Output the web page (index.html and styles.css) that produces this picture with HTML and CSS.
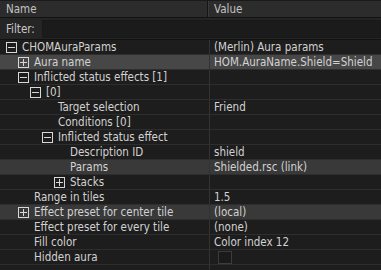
FILE: index.html
```html
<!DOCTYPE html>
<html lang="en">
<head>
    <meta charset="UTF-8">
    <title>Property grid</title>
    <link rel="stylesheet" href="styles.css">
</head>
<body>
<div class="grid">
    <div class="header">
        <div class="col-name">Name</div>
        <div class="col-value">Value</div>
    </div>
    <div class="filter">
        <label for="filterInput">Filter:</label>
        <input type="text" id="filterInput">
    </div>
    <div class="rows">
        <div class="row">
            <div class="name lvl0"><span class="box minus"></span>CHOMAuraParams</div>
            <div class="value">(Merlin) Aura params</div>
        </div>
        <div class="row hover">
            <div class="name lvl1"><span class="box plus"></span>Aura name</div>
            <div class="value">HOM.AuraName.Shield=Shield</div>
        </div>
        <div class="row">
            <div class="name lvl1"><span class="box minus"></span>Inflicted status effects [1]</div>
            <div class="value"></div>
        </div>
        <div class="row">
            <div class="name lvl2"><span class="box minus"></span>[0]</div>
            <div class="value"></div>
        </div>
        <div class="row">
            <div class="name lvl3 leaf">Target selection</div>
            <div class="value">Friend</div>
        </div>
        <div class="row">
            <div class="name lvl3 leaf">Conditions [0]</div>
            <div class="value"></div>
        </div>
        <div class="row">
            <div class="name lvl3"><span class="box minus"></span>Inflicted status effect</div>
            <div class="value"></div>
        </div>
        <div class="row">
            <div class="name lvl4 leaf">Description ID</div>
            <div class="value">shield</div>
        </div>
        <div class="row selected">
            <div class="name lvl4 leaf">Params</div>
            <div class="value">Shielded.rsc (link)</div>
        </div>
        <div class="row">
            <div class="name lvl4"><span class="box plus"></span>Stacks</div>
            <div class="value"></div>
        </div>
        <div class="row">
            <div class="name lvl1 leaf">Range in tiles</div>
            <div class="value">1.5</div>
        </div>
        <div class="row selected">
            <div class="name lvl1"><span class="box plus"></span>Effect preset for center tile</div>
            <div class="value">(local)</div>
        </div>
        <div class="row">
            <div class="name lvl1 leaf">Effect preset for every tile</div>
            <div class="value">(none)</div>
        </div>
        <div class="row">
            <div class="name lvl1 leaf">Fill color</div>
            <div class="value">Color index 12</div>
        </div>
        <div class="row">
            <div class="name lvl1 leaf">Hidden aura</div>
            <div class="value"><span class="check"></span></div>
        </div>
        <div class="row">
            <div class="name"></div>
            <div class="value"></div>
        </div>
    </div>
</div>
</body>
</html>
```

FILE: styles.css
```css
* {
    margin: 0;
    padding: 0;
    box-sizing: border-box;
}

body {
    background: #1c1c1c;
    color: #d2d2d2;
    font-family: "DejaVu Sans Condensed", "DejaVu Sans", sans-serif;
    font-size: 11.5px;
    overflow: hidden;
}

.grid {
    width: 381px;
    height: 270px;
    overflow: hidden;
}

.header {
    display: flex;
    height: 18px;
    background: #2c2c2c;
    border-top: 1px solid #1a1a1a;
    border-bottom: 1px solid #121212;
    color: #c2c2c2;
    line-height: 17px;
}

.header .col-name {
    width: 208px;
    padding-left: 6px;
    border-right: 1px solid #141414;
}

.header .col-value {
    flex: 1;
    padding-left: 5px;
    border-left: 1px solid #3a3a3a;
}

.filter {
    display: flex;
    align-items: center;
    height: 22px;
    background: #252525;
    border-bottom: 1px solid #121212;
    padding-left: 6px;
}

.filter label {
    width: 36px;
    color: #c8c8c8;
    padding-top: 1px;
}

.filter input {
    flex: 1;
    height: 18px;
    background: #1b1b1b;
    border: 1px solid #181818;
    outline: none;
}

.row {
    display: flex;
    height: 15px;
    line-height: 15px;
    border-bottom: 1px solid #2e2e2e;
    background: #1d1d1d;
}

.row.hover {
    background: #474747;
}

.row.selected {
    background: #393939;
}

.name {
    display: flex;
    align-items: center;
    width: 209px;
    white-space: nowrap;
    overflow: hidden;
}

.value {
    flex: 1;
    padding-left: 4px;
    border-left: 1px solid #333333;
    white-space: nowrap;
    overflow: hidden;
}

.lvl0 { padding-left: 6px; }
.lvl1 { padding-left: 18px; }
.lvl2 { padding-left: 30px; }
.lvl3 { padding-left: 42px; }
.lvl4 { padding-left: 54px; }

.leaf.lvl1 { padding-left: 34px; }
.leaf.lvl3 { padding-left: 58px; }
.leaf.lvl4 { padding-left: 70px; }

.box {
    position: relative;
    width: 11px;
    height: 11px;
    margin: 1px 5px 0 0;
    border: 1px solid #d8d8d8;
    flex-shrink: 0;
}

.box::before {
    content: "";
    position: absolute;
    left: 1px;
    top: 4px;
    width: 7px;
    height: 1px;
    background: #d8d8d8;
}

.box.plus::after {
    content: "";
    position: absolute;
    left: 4px;
    top: 1px;
    width: 1px;
    height: 7px;
    background: #d8d8d8;
}

.check {
    display: inline-block;
    width: 14px;
    height: 13px;
    margin: 1px 0 0 4px;
    background: #1a1a1a;
    border: 1px solid #3c3c3c;
    vertical-align: top;
}
```
